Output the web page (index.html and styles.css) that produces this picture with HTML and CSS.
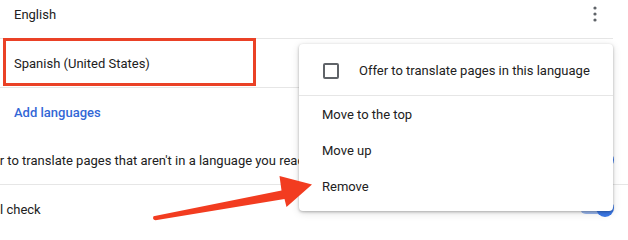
FILE: index.html
```html
<!DOCTYPE html>
<html>
<head>
<meta charset="utf-8">
<link rel="stylesheet" href="styles.css">
</head>
<body>
<div class="page">
  <div class="lang-list">
    <div class="row row-first">
      <span class="label">English</span>
      <svg class="kebab" width="24" height="24" viewBox="0 0 24 24"><circle cx="12" cy="6" r="1.6"/><circle cx="12" cy="12" r="1.6"/><circle cx="12" cy="18" r="1.6"/></svg>
    </div>
    <div class="row">
      <span class="label">Spanish (United States)</span>
    </div>
    <div class="row row-plain">
      <span class="link">Add languages</span>
    </div>
  </div>
  <div class="settings">
    <div class="srow">
      <span class="slabel">Offer to translate pages that aren't in a language you read</span>
      <span class="toggle"><span class="bar"></span><span class="knob"></span></span>
    </div>
    <div class="srow srow-last">
      <span class="slabel">Spell check</span>
      <span class="toggle toggle-low"><span class="bar"></span><span class="knob"></span></span>
    </div>
  </div>

  <div class="highlight"></div>

  <div class="menu">
    <div class="item item-check">
      <span class="checkbox"></span>
      <span>Offer to translate pages in this language</span>
    </div>
    <div class="item">Move to the top</div>
    <div class="item">Move up</div>
    <div class="item">Remove</div>
  </div>

  <svg class="arrow" width="628" height="240" viewBox="0 0 628 240">
    <path d="M153.5 216.2 L281.5 190.5 L279.5 176 L312 184.5 L286.5 207 L284.5 199 L155.5 220.2 Q152 219.5 153.5 216.2 Z" fill="#f23c20"/>
  </svg>
</div>
</body>
</html>
```

FILE: styles.css
```css
* { box-sizing: border-box; }
html, body { margin: 0; padding: 0; background: #fff; }
body {
  width: 628px;
  height: 240px;
  overflow: hidden;
  font-family: Roboto, "Liberation Sans", sans-serif;
  font-size: 13px;
  color: #212121;
}
.page {
  position: relative;
  width: 628px;
  height: 240px;
  overflow: hidden;
}
.lang-list {
  width: 613px;
  margin-top: -10px;
}
.row {
  height: 49px;
  display: flex;
  align-items: center;
  justify-content: space-between;
  padding-left: 14px;
  padding-right: 6px;
  border-bottom: 1px solid #e6e6e6;
}
.row-plain {
  border-bottom: none;
  height: 48px;
}
.kebab { fill: #5f6368; }
.link {
  color: #3367d6;
  font-weight: 500;
}
.settings {
  width: 628px;
}
.srow {
  height: 49px;
  display: flex;
  align-items: center;
  justify-content: space-between;
  padding-right: 14px;
  border-bottom: 1px solid #e6e6e6;
  overflow: hidden;
}
.srow-last { border-bottom: none; }
.slabel {
  margin-left: -25px;
  white-space: nowrap;
}
.toggle {
  position: relative;
  width: 36px;
  height: 18px;
  flex: none;
}
.toggle-low { margin-top: -4px; }
.toggle .bar {
  position: absolute;
  left: 2px;
  top: 3px;
  width: 32px;
  height: 12px;
  border-radius: 6px;
  background: #9ab8ef;
}
.toggle .knob {
  position: absolute;
  right: 0;
  top: 0;
  width: 18px;
  height: 18px;
  border-radius: 50%;
  background: #3b78e7;
}
.highlight {
  position: absolute;
  left: 3px;
  top: 37.5px;
  width: 253px;
  height: 48px;
  border: 3px solid #ea4126;
}
.menu {
  position: absolute;
  left: 299px;
  top: 44px;
  width: 314px;
  height: 167px;
  background: #fff;
  border-radius: 4px;
  box-shadow: 0 1px 3px rgba(0,0,0,0.28), 0 2px 8px rgba(0,0,0,0.12);
  padding-bottom: 7px;
}
.item {
  height: 36px;
  display: flex;
  align-items: center;
  padding-left: 23px;
}
.item-check {
  height: 52px;
  padding-top: 2px;
  padding-left: 24px;
  gap: 20px;
  border-bottom: 1px solid #e6e6e6;
}
.checkbox {
  width: 16px;
  height: 16px;
  border: 2px solid #5f6368;
  border-radius: 2px;
  flex: none;
}
.arrow {
  position: absolute;
  left: 0;
  top: 0;
  pointer-events: none;
}
```
